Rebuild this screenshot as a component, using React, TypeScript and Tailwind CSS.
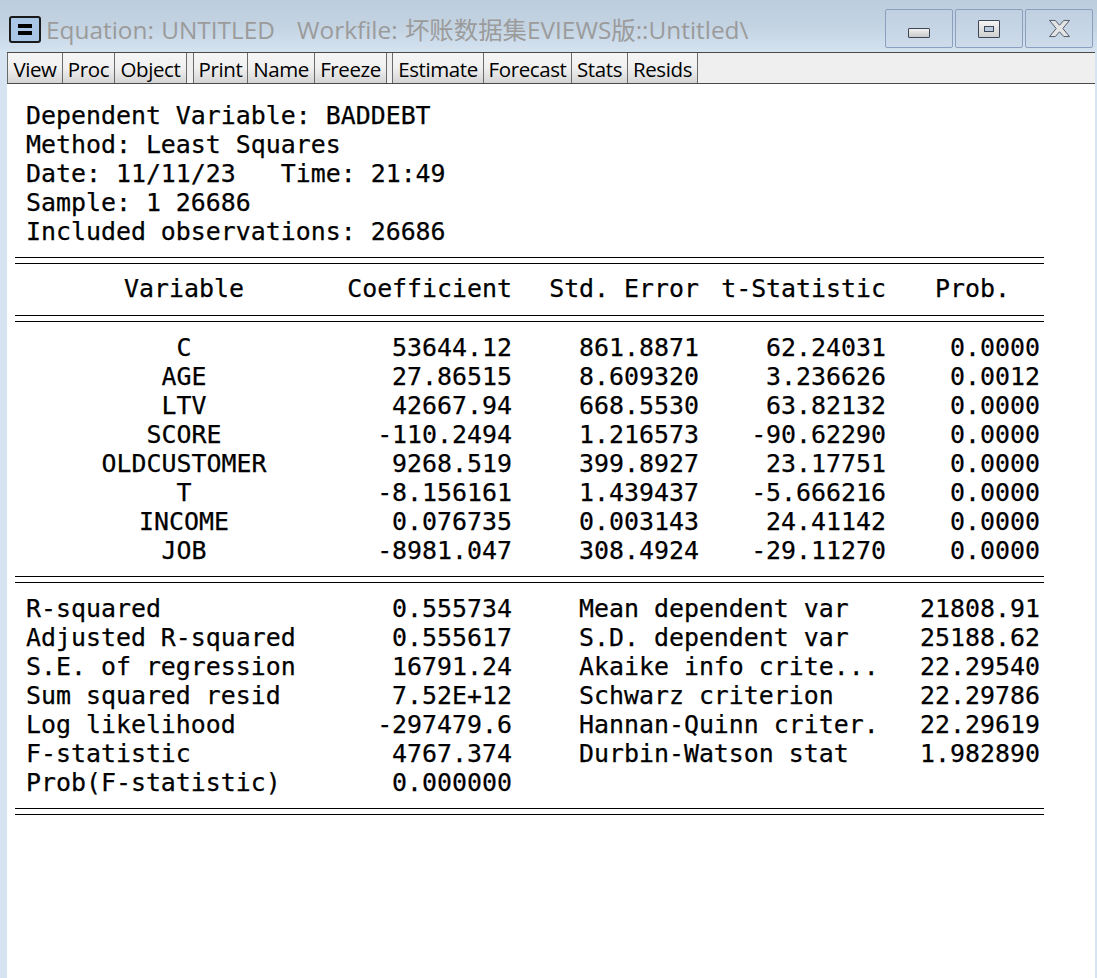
const mono = "font-['DejaVu_Sans_Mono','Liberation_Mono',monospace] text-[24.9px] leading-[29px] text-black whitespace-pre [-webkit-text-stroke:0.25px_black]";

const Double = ({ cls }: { cls: string }) => (
  <div className={cls}>
    <div className="h-px bg-black" />
    <div className="h-[5px]" />
    <div className="h-px bg-black" />
  </div>
);

const groups = [
  [["View", 56], ["Proc", 53], ["Object", 73]],
  [["Print", 55], ["Name", 68], ["Freeze", 73]],
  [["Estimate", 92], ["Forecast", 89], ["Stats", 57], ["Resids", 71]],
] as [string, number][][];

const rows = [
  ["C", "53644.12", "861.8871", "62.24031", "0.0000"],
  ["AGE", "27.86515", "8.609320", "3.236626", "0.0012"],
  ["LTV", "42667.94", "668.5530", "63.82132", "0.0000"],
  ["SCORE", "-110.2494", "1.216573", "-90.62290", "0.0000"],
  ["OLDCUSTOMER", "9268.519", "399.8927", "23.17751", "0.0000"],
  ["T", "-8.156161", "1.439437", "-5.666216", "0.0000"],
  ["INCOME", "0.076735", "0.003143", "24.41142", "0.0000"],
  ["JOB", "-8981.047", "308.4924", "-29.11270", "0.0000"],
];

const stats = [
  ["R-squared", "0.555734", "Mean dependent var", "21808.91"],
  ["Adjusted R-squared", "0.555617", "S.D. dependent var", "25188.62"],
  ["S.E. of regression", "16791.24", "Akaike info crite...", "22.29540"],
  ["Sum squared resid", "7.52E+12", "Schwarz criterion", "22.29786"],
  ["Log likelihood", "-297479.6", "Hannan-Quinn criter.", "22.29619"],
  ["F-statistic", "4767.374", "Durbin-Watson stat", "1.982890"],
  ["Prob(F-statistic)", "0.000000", "", ""],
];

const WinBtn = ({ children }: { children: React.ReactNode }) => (
  <div className="w-[68px] h-[39px] rounded-[2px] border border-[#8d9fbe] bg-gradient-to-b from-[#c0d0e0] to-[#cddbea] flex items-center justify-center">
    {children}
  </div>
);

export default function App() {
  return (
    <div className="w-[1097px] h-[978px] overflow-hidden flex flex-col bg-[#d6e4f2]">
      <div className="h-[52px] shrink-0 bg-gradient-to-b from-[#bccddd] via-[#c3d3e2] to-[#d5e3f1] flex items-start pl-[9px]">
        <div className="mt-[16px] w-[32px] h-[27px] rounded-[3px] border-2 border-[#1a1a1a] bg-[#a9c6e6] flex flex-col items-center justify-center gap-[3px]">
          <div className="w-[14px] h-[4px] bg-black" />
          <div className="w-[14px] h-[4px] bg-black" />
        </div>
        <div className="ml-[5px] mt-[13px] font-['Open_Sans','Noto_Sans_CJK_SC',sans-serif] text-[24.4px] leading-[34px] text-[#9b9b9b] whitespace-pre [word-spacing:1px]">
          {"Equation: UNTITLED   Workfile: 坏账数据集EVIEWS版::Untitled\\"}
        </div>
        <div className="ml-auto mr-[4px] mt-[9px] flex gap-[2px]">
          <WinBtn>
            <div className="mt-[8px] w-[22px] h-[10px] rounded-[1px] border border-[#3c4656] bg-gradient-to-b from-[#f2f2f2] to-[#c8c8c8]" />
          </WinBtn>
          <WinBtn>
            <div className="w-[22px] h-[18px] rounded-[1px] border border-[#3c4656] bg-gradient-to-b from-[#f4f4f4] to-[#cfcfcf] flex items-center justify-center">
              <div className="w-[10px] h-[6px] border border-[#3c4656] bg-[#b9cadc]" />
            </div>
          </WinBtn>
          <WinBtn>
            <svg width="23" height="19" viewBox="0 0 24 20">
              <path d="M1.5 1.5H7.5L12 6.5L16.5 1.5H22.5L15.5 10L22.5 18.5H16.5L12 13.5L7.5 18.5H1.5L8.5 10Z" fill="#e4e4e4" stroke="#4a5566" strokeWidth="1" />
            </svg>
          </WinBtn>
        </div>
      </div>
      <div className="flex-1 flex flex-col ml-[7px] mr-[2px] min-h-0">
        <div className="h-[32px] shrink-0 border-y border-[#4a4a4a] bg-[#efefef] flex">
          <div className="flex gap-[6px]">
            {groups.map((g, i) => (
              <div key={i} className={i === 0 ? "flex mr-px" : "flex"}>
                {g.map(([t, w]) => (
                  <div
                    key={t}
                    style={{ width: w }}
                    className="h-full border-x border-[#6a6a6a] -mr-px bg-gradient-to-b from-[#f6f6f6] via-[#f0f0f0] to-[#d4d4d4] flex items-center justify-center pt-[2px] font-['Open_Sans',sans-serif] text-[20.5px] tracking-[-0.4px] leading-none text-black"
                  >
                    {t}
                  </div>
                ))}
              </div>
            ))}
          </div>
        </div>
        <div className="flex-1 bg-white pt-[17px]">
          <div className={`${mono} pl-[19px]`}>
            <div>Dependent Variable: BADDEBT</div>
            <div>Method: Least Squares</div>
            <div>{"Date: 11/11/23   Time: 21:49"}</div>
            <div>Sample: 1 26686</div>
            <div>Included observations: 26686</div>
          </div>
          <Double cls="ml-[8px] w-[1029px] mt-[11px]" />
          <div className={`${mono} mt-[10px] flex`}>
            <div className="w-[354px] text-center">Variable</div>
            <div className="w-[151px] flex justify-end">Coefficient</div>
            <div className="w-[187px] text-right">Std. Error</div>
            <div className="w-[187px] text-right">t-Statistic</div>
            <div className="w-[124px] text-right">Prob.</div>
          </div>
          <Double cls="ml-[8px] w-[1029px] mt-[12px]" />
          <div className={`${mono} mt-[11px]`}>
            {rows.map((r) => (
              <div key={r[0]} className="flex">
                <div className="w-[354px] text-center">{r[0]}</div>
                <div className="w-[151px] text-right">{r[1]}</div>
                <div className="w-[187px] text-right">{r[2]}</div>
                <div className="w-[187px] text-right">{r[3]}</div>
                <div className="w-[154px] text-right">{r[4]}</div>
              </div>
            ))}
          </div>
          <Double cls="ml-[8px] w-[1029px] mt-[11px]" />
          <div className={`${mono} mt-[11px]`}>
            {stats.map((r) => (
              <div key={r[0]} className="flex h-[29px]">
                <div className="w-[505px] pl-[19px] flex justify-between">
                  <span>{r[0]}</span>
                  <span>{r[1]}</span>
                </div>
                <div className="w-[528px] pl-[67px] flex justify-between">
                  <span>{r[2]}</span>
                  <span>{r[3]}</span>
                </div>
              </div>
            ))}
          </div>
          <Double cls="ml-[8px] w-[1029px] mt-[11px]" />
        </div>
      </div>
    </div>
  );
}
